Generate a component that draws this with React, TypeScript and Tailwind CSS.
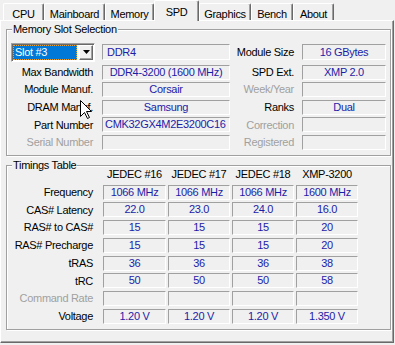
import React from "react";

const tabs = [
  { name: "CPU", w: "w-[41px]" },
  { name: "Mainboard", w: "w-[61px]" },
  { name: "Memory", w: "w-[49px]" },
  { name: "SPD", w: "w-[45px]", active: true },
  { name: "Graphics", w: "w-[52px]" },
  { name: "Bench", w: "w-[42px]" },
  { name: "About", w: "w-[41px]" },
];

const slotRows = [
  { left: "Max Bandwidth", lv: "DDR4-3200 (1600 MHz)", right: "SPD Ext.", rv: "XMP 2.0" },
  { left: "Module Manuf.", lv: "Corsair", right: "Week/Year", rv: "", rOff: true },
  { left: "DRAM Manuf.", lv: "Samsung", right: "Ranks", rv: "Dual" },
  { left: "Part Number", lv: "CMK32GX4M2E3200C16", lLeft: true, right: "Correction", rv: "", rOff: true },
  { left: "Serial Number", lv: "", lOff: true, right: "Registered", rv: "", rOff: true },
];

const heads = ["JEDEC #16", "JEDEC #17", "JEDEC #18", "XMP-3200"];

const timings = [
  { label: "Frequency", vals: ["1066 MHz", "1066 MHz", "1066 MHz", "1600 MHz"] },
  { label: "CAS# Latency", vals: ["22.0", "23.0", "24.0", "16.0"] },
  { label: "RAS# to CAS#", vals: ["15", "15", "15", "20"] },
  { label: "RAS# Precharge", vals: ["15", "15", "15", "20"] },
  { label: "tRAS", vals: ["36", "36", "36", "38"] },
  { label: "tRC", vals: ["50", "50", "50", "58"] },
  { label: "Command Rate", vals: ["", "", "", ""], off: true },
  { label: "Voltage", vals: ["1.20 V", "1.20 V", "1.20 V", "1.350 V"] },
];

// sunken static text box, like the win32 ones
const box =
  "border-t border-l border-t-[#a0a0a0] border-l-[#a0a0a0] border-b border-r border-b-white border-r-white text-[#1c1ca8] whitespace-nowrap overflow-hidden";

const groupCls =
  "ml-[5px] w-[385px] border border-[#a0a0a0] shadow-[inset_1px_1px_0_#fff,1px_1px_0_#fff]";

const Cursor = () => (
  <svg width="13" height="20" viewBox="0 0 13 20" className="absolute left-[80px] top-[100px] z-20">
    <path
      d="M0.5 0.5 L0.5 16.5 L4.5 12.5 L7.5 18.5 L9.5 17.5 L6.5 11.5 L11.5 11.5 Z"
      fill="#fff"
      stroke="#000"
      strokeWidth="1"
      strokeLinejoin="miter"
    />
  </svg>
);

export default function App() {
  return (
    <div className="relative w-[395px] h-[345px] bg-[#f0f0f0] overflow-hidden font-['Liberation_Sans',Arial,sans-serif] text-[11px] tracking-[-0.3px] text-black">
      {/* tabs */}
      <div className="flex items-end h-[20px] pl-[3px]">
        {tabs.map((t) =>
          t.active ? (
            <div
              key={t.name}
              className={`${t.w} relative z-10 -mb-px h-[21px] bg-[#f0f0f0] border-l border-t border-white border-r border-r-[#696969] shadow-[inset_-1px_0_0_#a0a0a0] rounded-t-[2px] flex justify-center pt-[3px]`}
            >
              {t.name}
            </div>
          ) : (
            <div
              key={t.name}
              className={`${t.w} h-[17px] border-l border-t border-white border-r border-r-[#696969] shadow-[inset_-1px_0_0_#a0a0a0] rounded-t-[2px] flex justify-center pt-[2px]`}
            >
              {t.name}
            </div>
          )
        )}
      </div>

      {/* panel */}
      <div className="w-[394px] h-[323px] border-t border-l border-white border-r border-b border-r-[#696969] border-b-[#696969] shadow-[inset_-1px_-1px_0_#a0a0a0]">
        <fieldset className={`${groupCls} mt-[2px]`}>
          <legend className="ml-[5px] px-[1px] leading-[13px] bg-[#f0f0f0]">Memory Slot Selection</legend>
          <div className="flex flex-col pl-[4px] pt-[6px] pb-[5px]">
            <div className="flex items-center h-[20px]">
              {/* combo */}
              <div className="w-[84px] h-[19px] bg-white border-t border-l border-t-[#a0a0a0] border-l-[#a0a0a0] border-b border-r border-b-white border-r-white shadow-[inset_1px_1px_0_#696969] flex pl-[1px] pt-[1px]">
                <div className="w-[64px] h-[15px] bg-[#0078d7] border border-dotted border-[#e0a040] text-white leading-[13px] pl-[1px]">
                  Slot #3
                </div>
                <div className="ml-[2px] w-[14px] h-[15px] bg-[#f0f0f0] border-t border-l border-white border-b border-r border-b-[#696969] border-r-[#696969] shadow-[inset_-1px_-1px_0_#a0a0a0] flex items-center justify-center">
                  <svg width="7" height="4" viewBox="0 0 7 4">
                    <path d="M0 0 H7 L3.5 4 Z" fill="#000" />
                  </svg>
                </div>
              </div>
              <div className={`${box} ml-[7px] w-[128px] h-[16px] leading-[14px] pl-[4px]`}>DDR4</div>
              <div className="w-[64px] text-right">Module Size</div>
              <div className={`${box} ml-[8px] w-[84px] h-[16px] leading-[14px] text-center`}>16 GBytes</div>
            </div>

            <div className="flex flex-col gap-[2.6px] mt-[2.5px]">
              {slotRows.map((r) => (
                <div key={r.left} className="flex items-center h-[15px]">
                  <div className={`w-[84px] text-right pr-[2px] ${r.lOff ? "text-[#a0a0a0]" : ""}`}>{r.left}</div>
                  <div
                    className={`${box} ml-[7px] w-[128px] h-[15px] leading-[13px] ${r.lLeft ? "pl-[2px]" : "text-center"}`}
                  >
                    {r.lv}
                  </div>
                  <div className={`w-[64px] text-right ${r.rOff ? "text-[#a0a0a0]" : ""}`}>{r.right}</div>
                  <div className={`${box} ml-[8px] w-[84px] h-[15px] leading-[13px] text-center`}>{r.rv}</div>
                </div>
              ))}
            </div>
          </div>
        </fieldset>

        <fieldset className={`${groupCls} mt-[3px]`}>
          <legend className="ml-[5px] px-[1px] leading-[13px] bg-[#f0f0f0]">Timings Table</legend>
          <div className="flex flex-col pb-[5.5px]">
            <div className="grid grid-cols-[94px_63px_62px_62px_62px] gap-x-[2px] h-[13px] -mt-[3.5px] mb-[2.5px] leading-[13px]">
              <div></div>
              {heads.map((h) => (
                <div key={h} className="text-center">
                  {h}
                </div>
              ))}
            </div>
            <div className="flex flex-col gap-[2.75px]">
              {timings.map((row) => (
                <div key={row.label} className="grid grid-cols-[94px_63px_62px_62px_62px] gap-x-[2px] h-[15px] items-center">
                  <div className={`text-right pr-[8px] ${row.off ? "text-[#a0a0a0]" : ""}`}>{row.label}</div>
                  {row.vals.map((v, i) => (
                    <div key={i} className={`${box} h-[15px] leading-[13px] text-center`}>
                      {v}
                    </div>
                  ))}
                </div>
              ))}
            </div>
          </div>
        </fieldset>
      </div>

      <Cursor />
    </div>
  );
}
